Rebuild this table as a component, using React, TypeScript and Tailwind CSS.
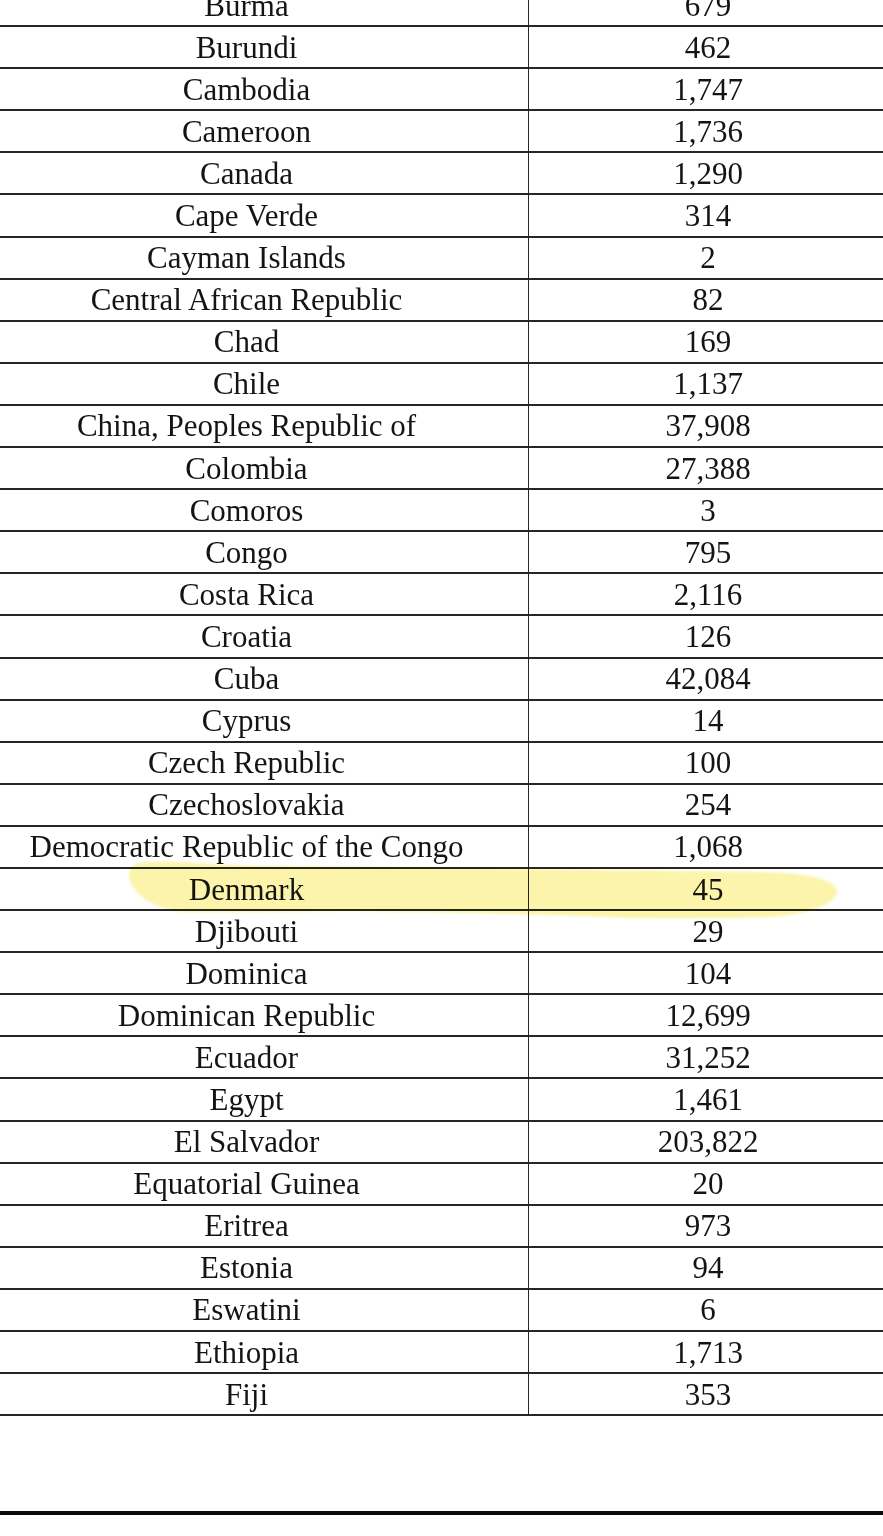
import React from "react";

const rows: [string, string][] = [
  ["Burma", "679"],
  ["Burundi", "462"],
  ["Cambodia", "1,747"],
  ["Cameroon", "1,736"],
  ["Canada", "1,290"],
  ["Cape Verde", "314"],
  ["Cayman Islands", "2"],
  ["Central African Republic", "82"],
  ["Chad", "169"],
  ["Chile", "1,137"],
  ["China, Peoples Republic of", "37,908"],
  ["Colombia", "27,388"],
  ["Comoros", "3"],
  ["Congo", "795"],
  ["Costa Rica", "2,116"],
  ["Croatia", "126"],
  ["Cuba", "42,084"],
  ["Cyprus", "14"],
  ["Czech Republic", "100"],
  ["Czechoslovakia", "254"],
  ["Democratic Republic of the Congo", "1,068"],
  ["Denmark", "45"],
  ["Djibouti", "29"],
  ["Dominica", "104"],
  ["Dominican Republic", "12,699"],
  ["Ecuador", "31,252"],
  ["Egypt", "1,461"],
  ["El Salvador", "203,822"],
  ["Equatorial Guinea", "20"],
  ["Eritrea", "973"],
  ["Estonia", "94"],
  ["Eswatini", "6"],
  ["Ethiopia", "1,713"],
  ["Fiji", "353"],
];

export default function App() {
  return (
    <div className="relative w-[883px] h-[1536px] overflow-hidden bg-white font-['Liberation_Serif',serif] text-[#141414]">
      {/* table is cropped: first row cut at the top, left edge off screen */}
      <div className="ml-[-35px] mt-[-15px] w-[922px]">
        {rows.map(([country, count]) => (
          <div key={country} className="flex h-[42.1px] border-b-2 border-[#262626]">
            <div className="w-[564px] flex items-center justify-center border-r-[1.5px] border-[#262626] text-[31px] leading-none">
              {country}
            </div>
            <div className="flex-1 flex items-center justify-center text-[31px] leading-none">
              {count}
            </div>
          </div>
        ))}
        <div className="h-[95px]" />
        <div className="h-[4px] bg-[#0a0a0a]" />
      </div>

      {/* highlighter stroke over Denmark */}
      <svg
        className="absolute left-0 top-[840px] mix-blend-multiply pointer-events-none"
        width="883"
        height="90"
        viewBox="0 0 883 90"
      >
        <defs>
          <filter id="soft" x="-5%" y="-30%" width="110%" height="160%">
            <feGaussianBlur stdDeviation="1.6" />
          </filter>
        </defs>
        <path
          d="M136 24 C152 18 200 24 260 26 L529 29 C620 30 700 31 760 32 C812 33 837 40 837 52 C837 66 800 75 771 77 C720 79 660 78 632 78 C560 75 450 72 352 71 L190 72 C160 71 140 60 131 44 C127 34 129 27 136 24 Z"
          fill="#fbf4aa"
          filter="url(#soft)"
        />
      </svg>
    </div>
  );
}
